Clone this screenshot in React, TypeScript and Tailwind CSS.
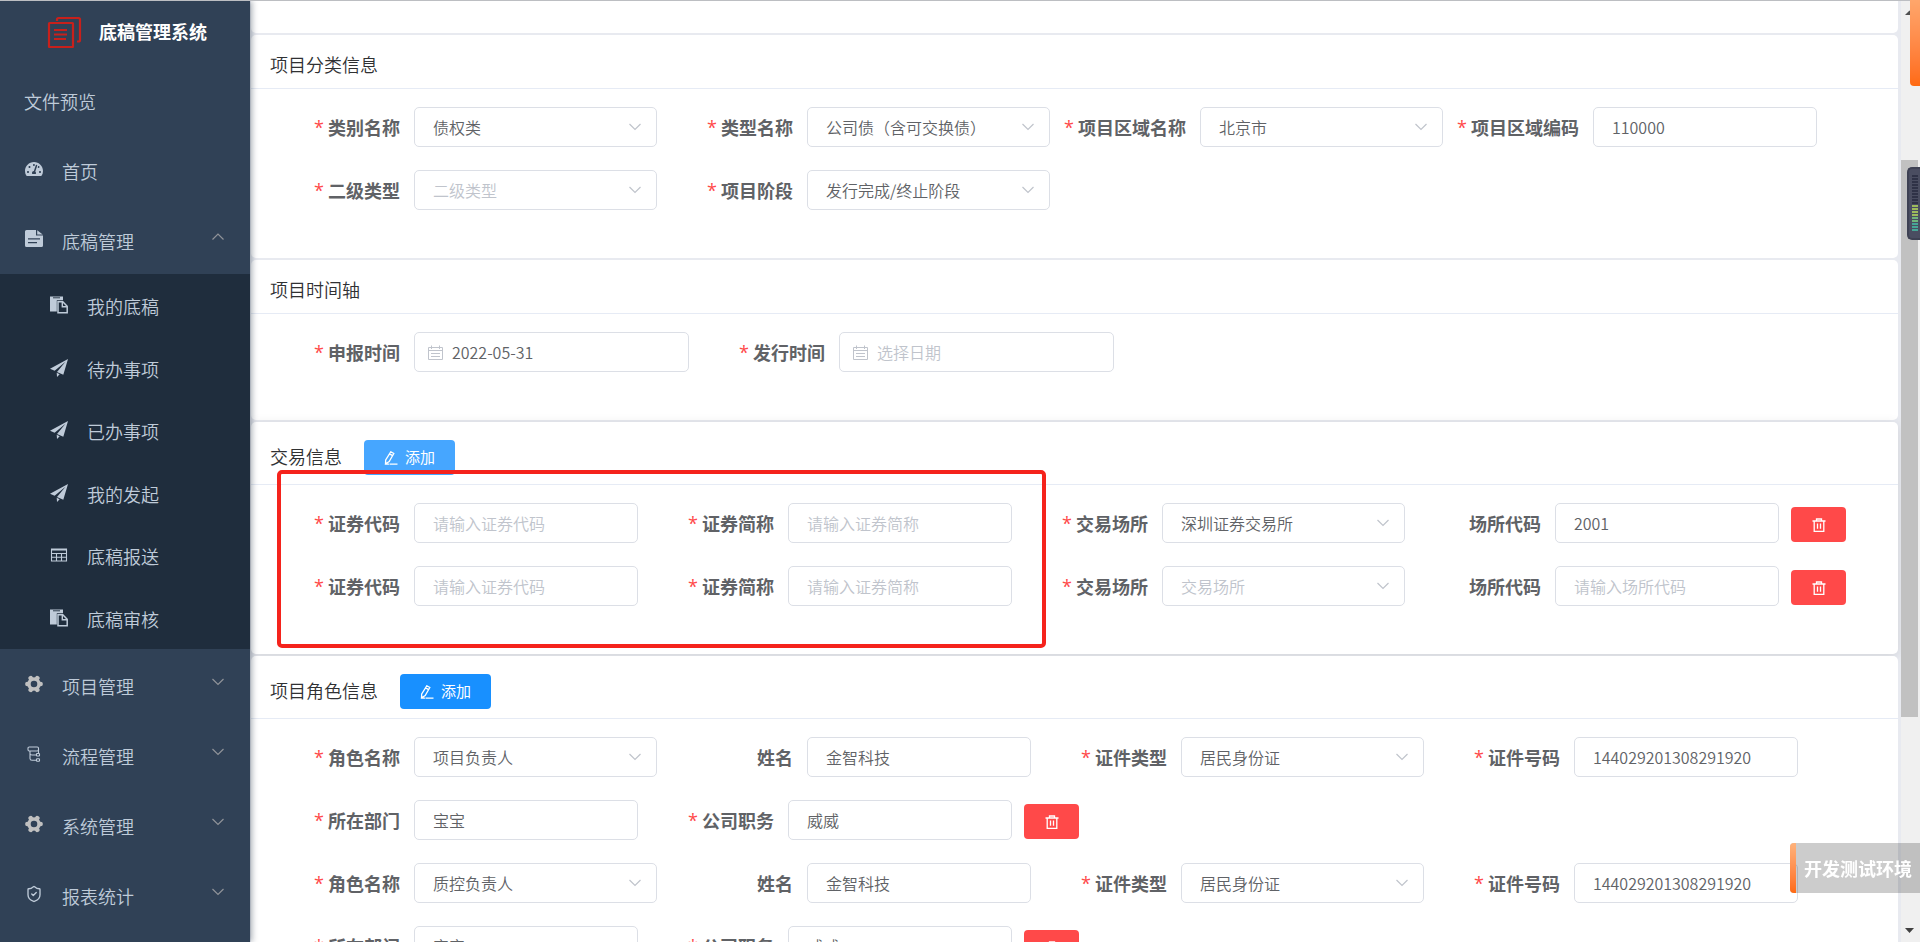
import React, { useId, useState } from "react";
import { FaTachometerAlt } from "react-icons/fa";
import { ShieldCheck } from "lucide-react";

// ---------- Icons ----------
const LogoIcon = () => (
    <svg className="h-[32px] w-[36px] shrink-0" viewBox="0 0 36 32" fill="none" stroke="#c8201b" strokeWidth="2.2">
        <path d="M10 5V3.5C10 2.500 10.500 2 11.500 2H31.500C32.500 2 33 2.500 33 3.500V24C33 25 32.500 25.500 31.500 25.500H30" />
        <rect x="2" y="7" width="24" height="24" rx="0.500" />
        <path d="M7 14H20M7 18.500H20M7 23H19" />
    </svg>
);

const DocIcon = () => (
    <svg className="size-[18px]" viewBox="0 0 18 18">
        <path
            fill="currentColor"
            fillRule="evenodd"
            d="M1.500 0H11V5.500H18V15.500Q18 17 16.500 17H1.500Q0 17 0 15.500V1.500Q0 0 1.500 0ZM12.200 .3L17.700 4.400H12.200ZM3 8.300H15V9.500H3ZM3 12H12V13.200H3Z"
        />
    </svg>
);

const PasteIcon = () => (
    <svg className="size-[18px]" viewBox="0 0 18 18">
        <path fill="currentColor" d="M0 .5H13V4.200H6.800V15.500H0Z" />
        <path d="M3 1.800H10" stroke="#1f2d3d" strokeWidth="0.900" />
        <path d="M8 5.700H12.800L17.200 10.200V16.700H8Z" fill="#1f2d3d" stroke="currentColor" strokeWidth="1.500" />
        <path d="M12.300 5.700V10.700H17.200" fill="none" stroke="currentColor" strokeWidth="1.400" />
    </svg>
);

const PlaneIcon = () => (
    <svg className="size-[18px]" viewBox="0 0 18 18" fill="currentColor">
        <path d="M18 0L0 9.700L4.600 11.800L15.500 2.800L7 12.900L13.300 15.800Z" />
        <path d="M6.700 13.800L9.700 15.200L7 18Z" />
    </svg>
);

const TableIcon = () => (
    <svg className="size-[18px]" viewBox="0 0 18 18" fill="none" stroke="currentColor" strokeWidth="1.100">
        <path d="M1.500 3H16.500V15H1.500ZM1.500 4H16.500M1.500 7.500H16.500M1.500 11.200H16.500M6.500 7.500V15M11.500 7.500V15" />
    </svg>
);

const GearIcon = () => (
    <svg className="size-[18px]" viewBox="0 0 18 18" fill="none" stroke="#c0c0c0">
        <circle cx="9" cy="9" r="5" strokeWidth="3.400" />
        <path
            strokeWidth="4.600"
            strokeLinecap="round"
            d="M15.200 9H15.600M2.400 9H2.800M12 3.600L12.300 3.100M6 3.600L5.700 3.100M12 14.400L12.300 14.900M6 14.400L5.700 14.900"
        />
    </svg>
);

const FlowIcon = () => (
    <svg className="size-[18px]" viewBox="0 0 18 18" fill="none" stroke="currentColor" strokeWidth="1.100">
        <rect x="3" y="2" width="10.500" height="4" rx="1.200" />
        <path d="M5 6V13.500Q5 15.300 7 15.300H11.500M5 8.500Q5 10 7 10H11.500" />
        <rect x="11.500" y="8.500" width="3" height="2.500" rx="0.600" />
        <rect x="11.500" y="13.800" width="3" height="2.500" rx="0.600" />
        <path d="M13.500 4V8.500" />
    </svg>
);

const ShieldIcon = () => <ShieldCheck className="size-[18px]" strokeWidth={1.8} />;

const GaugeIcon = () => <FaTachometerAlt className="size-[18px]" />;

const Chevron = ({ up = false, className = "" }: { up?: boolean; className?: string }) => (
    <svg className={`h-[8px] w-[14px] ${className}`} viewBox="0 0 14 8" fill="none" stroke="currentColor" strokeWidth="1.200">
        <path d={up ? "M1.500 6.500L7 1L12.500 6.500" : "M1.500 1L7 6.500L12.500 1"} />
    </svg>
);

const EditIcon = () => (
    <svg className="size-[14px]" viewBox="0 0 14 14" fill="none" stroke="currentColor" strokeWidth="1.300">
        <path d="M6.800 .8L9.800 2.500L5.200 10.500L1.500 12.800L1.700 8.900ZM5.600 2.900L8.600 4.600M5.500 13.200H13.500M1.500 12.800L5 13.200" />
    </svg>
);

const TrashIcon = () => (
    <svg className="size-[14px]" viewBox="0 0 14 14" fill="none" stroke="currentColor" strokeWidth="1.300">
        <path d="M.5 3H13.500M4.500 3V1H9.500V3M2.200 3V13.300H11.800V3M5.500 5.500V10.800M8.500 5.500V10.800" />
    </svg>
);

const CalendarIcon = () => (
    <svg className="size-[15px]" viewBox="0 0 15 15" fill="none" stroke="currentColor">
        <path d="M.5 2.500H14.500V14.500H.5ZM.5 5.500H14.500M3.500 .5V4M11.500 .5V4M3 8.500H12M3 11.500H12" />
    </svg>
);

// ---------- Sidebar ----------
const subMenu = [
    { text: "我的底稿", Icon: PasteIcon },
    { text: "待办事项", Icon: PlaneIcon },
    { text: "已办事项", Icon: PlaneIcon },
    { text: "我的发起", Icon: PlaneIcon },
    { text: "底稿报送", Icon: TableIcon },
    { text: "底稿审核", Icon: PasteIcon },
];

const bottomMenu = [
    { text: "项目管理", Icon: GearIcon },
    { text: "流程管理", Icon: FlowIcon },
    { text: "系统管理", Icon: GearIcon },
    { text: "报表统计", Icon: ShieldIcon },
];

const Sidebar = () => {
    const [open, setOpen] = useState(true);

    return (
        <aside className="z-10 flex w-[250px] shrink-0 flex-col bg-[#304156] text-[18px] font-[350] text-[#bfcbd9] shadow-[2px_0_6px_rgba(0,21,41,0.35)]">
            <div className="flex h-[63px] shrink-0 items-center gap-4 pb-[2px] pl-[47px]">
                <LogoIcon />
                <h1 className="font-bold text-white">底稿管理系统</h1>
            </div>
            <nav>
                <a href="#preview" className="flex h-[70px] items-center pl-[24px]">
                    <span className="pt-1">文件预览</span>
                </a>
                <a href="#home" className="flex h-[70px] items-center gap-[19px] pl-[25px]">
                    <GaugeIcon />
                    <span className="pt-1">首页</span>
                </a>
                <button
                    type="button"
                    onClick={() => setOpen(!open)}
                    className="flex h-[70px] w-full items-center gap-[19px] pr-[25px] pl-[25px]"
                >
                    <DocIcon />
                    <span className="pt-1">底稿管理</span>
                    <Chevron up={open} className="mb-1 ml-auto text-[#909399]" />
                </button>
                {open && (
                    <div className="bg-[#1f2d3d]">
                        {subMenu.map(({ text, Icon }) => (
                            <a key={text} href="#draft" className="flex items-center gap-[19px] pl-[50px] odd:h-[62px] even:h-[63px]">
                                <Icon />
                                <span className="pt-[3px]">{text}</span>
                            </a>
                        ))}
                    </div>
                )}
                {bottomMenu.map(({ text, Icon }) => (
                    <button key={text} type="button" className="flex h-[70px] w-full items-center gap-[19px] pr-[25px] pl-[25px]">
                        <Icon />
                        <span className="pt-1">{text}</span>
                        <Chevron className="mb-1 ml-auto text-[#909399]" />
                    </button>
                ))}
            </nav>
        </aside>
    );
};

// ---------- Form ----------
interface IField {
    label: string;
    value?: string;
    placeholder?: string;
    type?: "text" | "select" | "date";
    required?: boolean;
}

const controlBase =
    "h-10 rounded-[5px] border border-[#dcdfe6] bg-white text-[16px] font-[350] text-[#606266] outline-none placeholder:text-[#c0c4cc]";

const Field = ({ label, value = "", placeholder = "", type = "text", required = true }: IField) => {
    const id = useId();
    const [current, setCurrent] = useState(value);

    return (
        <div className="flex">
            <label htmlFor={id} className="flex h-10 w-[150px] items-center justify-end gap-1 pr-[14px] text-[18px] font-bold text-[#606266]">
                {required && <span className="font-['Open_Sans',sans-serif] font-normal text-[#ff4949]">*</span>}
                {label}
            </label>
            {type === "select" && (
                <div className="relative">
                    <select
                        id={id}
                        value={current}
                        onChange={(e) => setCurrent(e.target.value)}
                        className={`${controlBase} w-[243px] appearance-none pr-9 pl-[18px] ${current ? "" : "text-[#c0c4cc]!"}`}
                    >
                        {placeholder && <option value="">{placeholder}</option>}
                        {value && <option value={value}>{value}</option>}
                    </select>
                    <Chevron className="pointer-events-none absolute top-4 right-[15px] text-[#c0c4cc]" />
                </div>
            )}
            {type === "date" && (
                <div className={`${controlBase} flex w-[275px] items-center gap-[9px] pl-[13px]`}>
                    <span className="text-[#c0c4cc]">
                        <CalendarIcon />
                    </span>
                    <input
                        id={id}
                        value={current}
                        placeholder={placeholder}
                        onChange={(e) => setCurrent(e.target.value)}
                        className="min-w-0 flex-1 outline-none placeholder:text-[#c0c4cc]"
                    />
                </div>
            )}
            {type === "text" && (
                <input
                    id={id}
                    value={current}
                    placeholder={placeholder}
                    onChange={(e) => setCurrent(e.target.value)}
                    className={`${controlBase} w-[224px] px-[18px]`}
                />
            )}
        </div>
    );
};

const DeleteButton = () => (
    <button
        type="button"
        aria-label="删除"
        className="mt-1 ml-3 flex h-[35px] w-[55px] items-center justify-center rounded-[4px] bg-[#ff4949] text-white"
    >
        <TrashIcon />
    </button>
);

const AddButton = ({ hovered = false }: { hovered?: boolean }) => (
    <button
        type="button"
        className={`flex h-[35px] items-center gap-[7px] rounded-[4px] px-5 text-[15px] text-white ${hovered ? "bg-[#46a6ff]" : "bg-[#1890ff]"}`}
    >
        <EditIcon />
        添加
    </button>
);

interface ICard {
    title: string;
    action?: React.ReactNode;
    className?: string;
    children: React.ReactNode;
}

const Card = ({ title, action, className = "", children }: ICard) => (
    <section className={`rounded-[5px] bg-white ${className}`}>
        <header className="flex items-center gap-[22px] border-b border-[#e6ebf5] pt-[18px] pb-[9px] pl-[19px]">
            <h2 className="pb-1 text-[18px] leading-[22px] font-[350] text-[#303133]">{title}</h2>
            {action}
        </header>
        <div className="flex flex-col gap-[23px] pt-[18px] pb-12 pl-[13px]">{children}</div>
    </section>
);

const Row = ({ children }: { children: React.ReactNode }) => <div className="flex">{children}</div>;

const trades = [
    { place: "深圳证券交易所", code: "2001" },
    { place: "", code: "" },
];

const roles = ["项目负责人", "质控负责人"];

// ---------- Right side ----------
const ScrollBar = () => (
    <div className="flex w-[19px] shrink-0 flex-col bg-[#f0f0f0] pr-[2px]">
        <svg className="h-[159px] w-[17px] shrink-0" viewBox="0 0 17 159">
            <path d="M4 14L8.500 9.500L13 14Z" fill="#505050" />
        </svg>
        <div className="h-[557px] shrink-0 bg-[#c1c1c1]" />
        <svg className="mt-auto h-[20px] w-[17px] shrink-0" viewBox="0 0 17 20">
            <path d="M4 6H13L8.500 11Z" fill="#404040" />
        </svg>
    </div>
);

const LevelMeter = () => (
    <div className="fixed top-[167px] right-0 z-20 rounded-l-[5px] border-2 border-r-0 border-[#3e4153] bg-[#4a4d61] py-[6px] pr-[2px] pl-[3px]">
        <svg className="h-[57px] w-[6px]" viewBox="0 0 6 57">
            {Array.from({ length: 19 }, (_, i) => (
                <rect
                    key={i}
                    y={i * 3}
                    width="6"
                    height="2"
                    fill={i < 10 ? "#2f3247" : i < 14 ? "#9dbb5c" : i < 16 ? "#6fb57c" : "#46a596"}
                />
            ))}
        </svg>
    </div>
);

const App = () => {
    return (
        <div className="flex h-screen overflow-hidden border-t border-[#bcbec2] bg-[#e8eaf0] font-['Noto_Sans_CJK_SC',sans-serif]">
            <Sidebar />

            <main className="flex min-w-0 flex-1 flex-col gap-[2px] overflow-hidden pr-[3px] pl-px">
                <div className="h-8 shrink-0 rounded-b-[5px] bg-white" />

                <Card title="项目分类信息">
                    <Row>
                        <Field label="类别名称" type="select" value="债权类" />
                        <Field label="类型名称" type="select" value="公司债（含可交换债）" />
                        <Field label="项目区域名称" type="select" value="北京市" />
                        <Field label="项目区域编码" value="110000" />
                    </Row>
                    <Row>
                        <Field label="二级类型" type="select" placeholder="二级类型" />
                        <Field label="项目阶段" type="select" value="发行完成/终止阶段" />
                    </Row>
                </Card>

                <Card title="项目时间轴">
                    <Row>
                        <Field label="申报时间" type="date" value="2022-05-31" />
                        <Field label="发行时间" type="date" placeholder="选择日期" />
                    </Row>
                </Card>

                <Card title="交易信息" action={<AddButton hovered />} className="relative shadow-[0_2px_12px_rgba(0,0,0,0.1)]">
                    {trades.map((item, i) => (
                        <Row key={i}>
                            <Field label="证券代码" placeholder="请输入证券代码" />
                            <Field label="证券简称" placeholder="请输入证券简称" />
                            <Field label="交易场所" type="select" value={item.place} placeholder="交易场所" />
                            <Field label="场所代码" value={item.code} placeholder="请输入场所代码" required={false} />
                            <DeleteButton />
                        </Row>
                    ))}
                    {/* Red frame around the code and short name fields */}
                    <div className="pointer-events-none absolute top-12 bottom-[6px] left-[26px] w-[769px] rounded-[5px] border-4 border-[#f5231c]" />
                </Card>

                <Card title="项目角色信息" action={<AddButton />} className="relative">
                    {roles.map((role) => (
                        <React.Fragment key={role}>
                            <Row>
                                <Field label="角色名称" type="select" value={role} />
                                <Field label="姓名" value="金智科技" required={false} />
                                <Field label="证件类型" type="select" value="居民身份证" />
                                <Field label="证件号码" value="144029201308291920" />
                            </Row>
                            <Row>
                                <Field label="所在部门" value="宝宝" />
                                <Field label="公司职务" value="威威" />
                                <DeleteButton />
                            </Row>
                        </React.Fragment>
                    ))}
                </Card>
            </main>

            <ScrollBar />

            <div className="fixed top-0 right-0 z-20 h-[86px] w-[10px] rounded-bl-[4px] bg-linear-to-b from-[#ffa66b] to-[#ff6a10]" />
            <LevelMeter />
            <div className="fixed right-0 bottom-[49px] z-20 flex h-[50px] items-stretch overflow-hidden rounded-l-[4px] bg-black/20">
                <div className="w-[6px] bg-linear-to-b from-[#ffb27a] to-[#ff6a10]" />
                <span className="flex items-center pr-2 pl-2 text-[18px] font-bold text-white">开发测试环境</span>
            </div>
        </div>
    );
};

export default App;
